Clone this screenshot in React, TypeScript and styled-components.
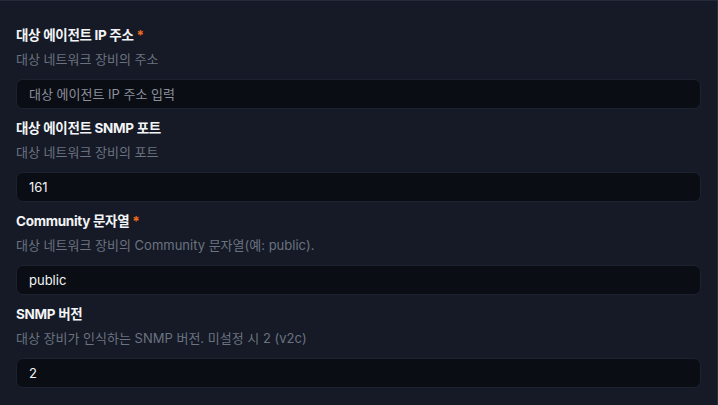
import React from "react";
import styled, { createGlobalStyle } from "styled-components";

const Global = createGlobalStyle`
  html, body { margin: 0; padding: 0; background: #151a26; }
  body { font-family: Inter, "Noto Sans CJK KR", sans-serif; -webkit-font-smoothing: antialiased; }
  * { box-sizing: border-box; }
`;

const Panel = styled.div`
  width: 718px;
  height: 405px;
  background: #151a26;
  border-top: 1px solid #232a3a;
  border-right: 1px solid #2a2f3e;
  padding: 24px 16px 0 16px;
  display: flex;
  flex-direction: column;
  gap: 9px;
  overflow: hidden;
`;

const Field = styled.div`
  display: flex;
  flex-direction: column;
`;

const Label = styled.label`
  font-size: 13.5px;
  line-height: 20px;
  font-weight: 700;
  letter-spacing: -0.3px;
  color: #f3f4f6;
  display: flex;
  gap: 3px;
  align-items: center;
`;

const Required = styled.span`
  color: #f26b1d;
  font-weight: 700;
`;

const Description = styled.div`
  margin-top: 4px;
  font-size: 13px;
  line-height: 20px;
  color: #6b7280;
`;

const Input = styled.input`
  margin-top: 10px;
  width: 100%;
  height: 30px;
  background: #0a0d14;
  border: 1px solid #1d2230;
  border-radius: 7px;
  padding: 0 12px;
  font-family: Inter, "Noto Sans CJK KR", sans-serif;
  font-size: 13px;
  color: #f3f4f6;
  outline: none;
  &::placeholder { color: #8a909b; }
`;

type F = { label: string; required?: boolean; desc: string; value?: string; placeholder?: string };

const fields: F[] = [
  { label: "대상 에이전트 IP 주소", required: true, desc: "대상 네트워크 장비의 주소", placeholder: "대상 에이전트 IP 주소 입력" },
  { label: "대상 에이전트 SNMP 포트", desc: "대상 네트워크 장비의 포트", value: "161" },
  { label: "Community 문자열", required: true, desc: "대상 네트워크 장비의 Community 문자열(예: public).", value: "public" },
  { label: "SNMP 버전", desc: "대상 장비가 인식하는 SNMP 버전. 미설정 시 2 (v2c)", value: "2" },
];

export default function App() {
  return (
    <>
      <Global />
      <Panel>
        {fields.map((f) => (
          <Field key={f.label}>
            <Label>
              {f.label}
              {f.required && <Required>*</Required>}
            </Label>
            <Description>{f.desc}</Description>
            <Input defaultValue={f.value} placeholder={f.placeholder} readOnly />
          </Field>
        ))}
      </Panel>
    </>
  );
}
